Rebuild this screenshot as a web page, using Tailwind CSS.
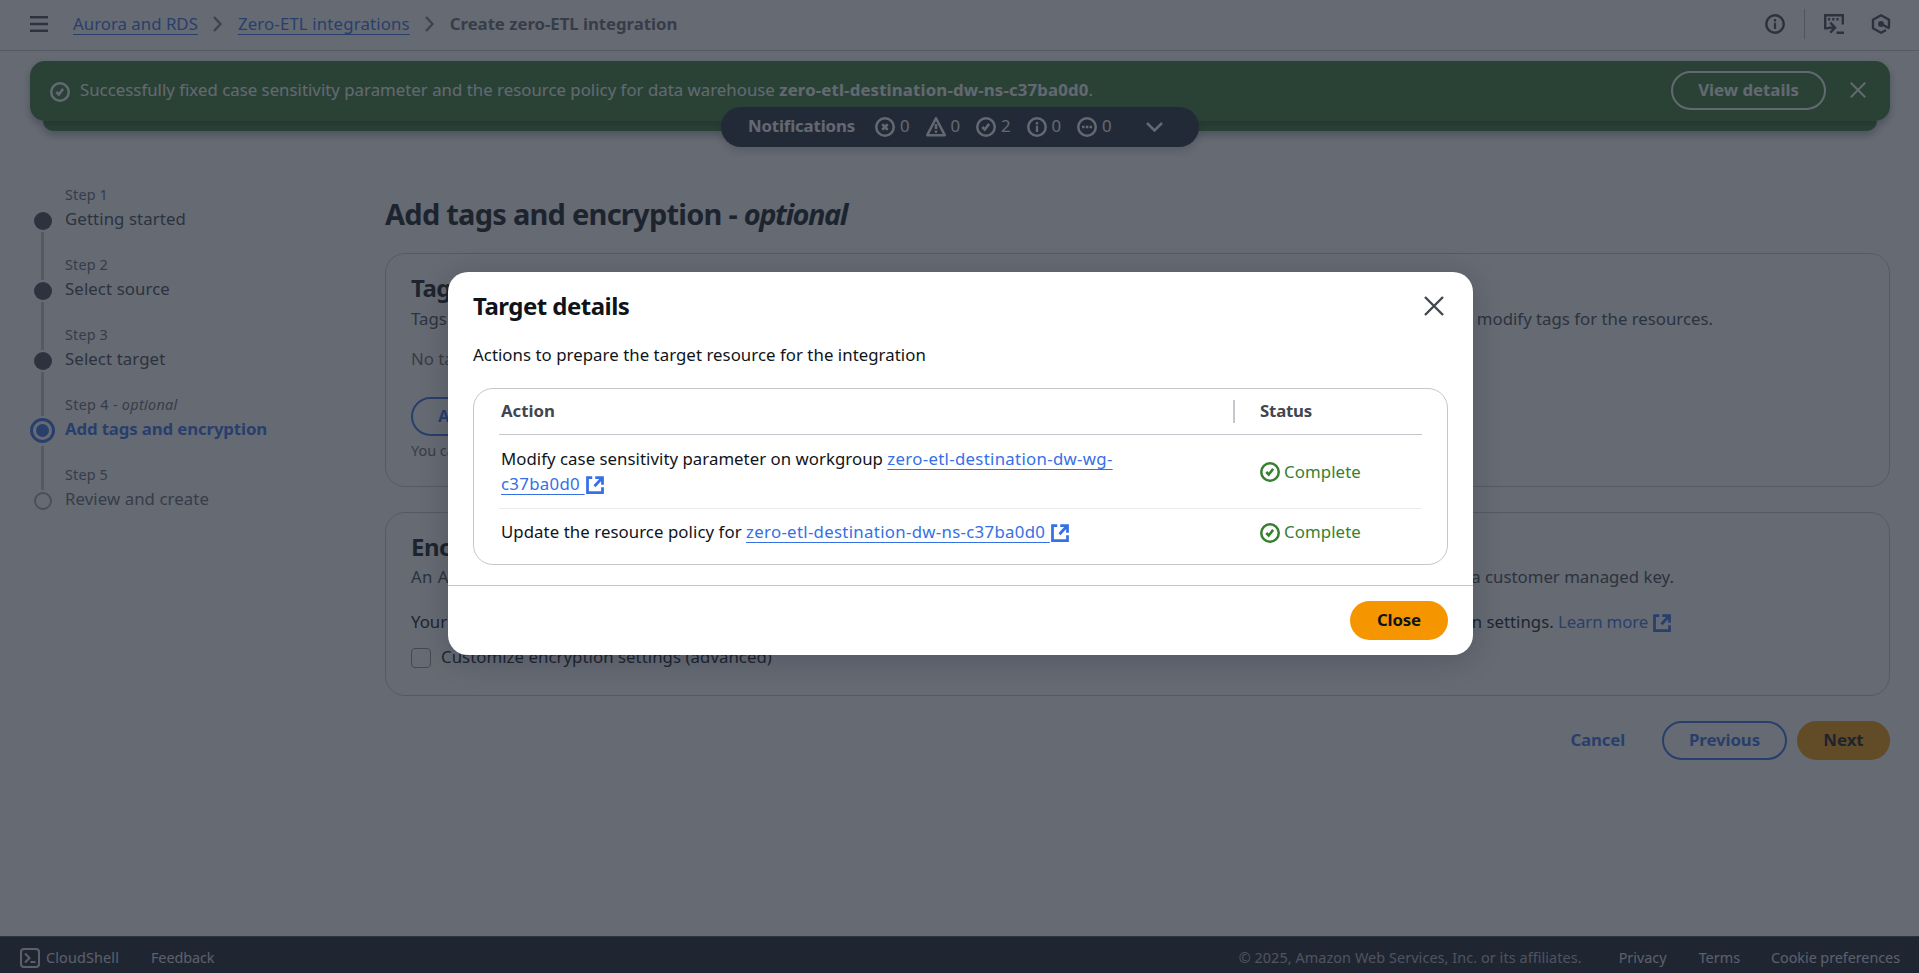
<!DOCTYPE html>
<html lang="en">
<head>
<meta charset="utf-8">
<title>Create zero-ETL integration</title>
<script src="https://cdn.jsdelivr.net/npm/@tailwindcss/browser@4"></script>
</head>
<body class="relative h-[973px] w-[1919px] overflow-hidden bg-white font-['Noto_Sans',sans-serif] text-[16.8px] leading-[25px] text-[#0f141a]">

<svg class="hidden">
  <symbol id="check" viewBox="0 0 16 16" fill="none" stroke="currentColor" stroke-width="2"><circle cx="8" cy="8" r="7"/><path d="m5 8 2 2 3.5-4.5"/></symbol>
  <symbol id="info" viewBox="0 0 16 16" fill="none" stroke="currentColor" stroke-width="2"><circle cx="8" cy="8" r="7"/><path d="M8 7v5M8 4v2" stroke-width="1.8"/></symbol>
  <symbol id="error" viewBox="0 0 16 16" fill="none" stroke="currentColor" stroke-width="2"><circle cx="8" cy="8" r="7"/><path d="m5.8 5.8 4.4 4.4m0-4.4-4.4 4.4"/></symbol>
  <symbol id="warn" viewBox="0 0 16 16" fill="none" stroke="currentColor" stroke-width="2" stroke-linejoin="round"><path d="m8 1 7 13.5H1L8 1Z"/><path d="M8 5.5v4M8 10.7v1.9"/></symbol>
  <symbol id="dots" viewBox="0 0 16 16" fill="none" stroke="currentColor" stroke-width="2"><circle cx="8" cy="8" r="7"/><path d="M4 8h2M7 8h2M10 8h2"/></symbol>
  <symbol id="ext" viewBox="0 0 16 16" fill="none" stroke="currentColor" stroke-width="2.2"><path d="M5.8 2H2v12h12V9.800M8.200 2.100H14v5.700M13.800 2.200 7.600 9"/></symbol>
  <symbol id="close" viewBox="0 0 20 20" fill="none" stroke="currentColor" stroke-width="2.4"><path d="m1 1 18 18M19 1 1 19"/></symbol>
  <symbol id="chev" viewBox="0 0 10 16" fill="none" stroke="currentColor" stroke-width="2.4"><path d="m1 1 6.5 7L1 15"/></symbol>
</svg>

<div class="flex h-full flex-col">
  <!-- Breadcrumb bar -->
  <header class="flex h-[51px] shrink-0 items-center border-b border-[#c6c6cd] pb-[2px] pl-[30px] pr-[28px]">
    <svg class="h-4 w-[18px] text-[#424650]" viewBox="0 0 18 16" stroke="currentColor" stroke-width="2.5"><path d="M0 1.25h18M0 8h18M0 14.75h18"/></svg>
    <a class="-mt-[2px] ml-[25px] tracking-[0.02px] text-[#3570e6] underline decoration-1 underline-offset-4 [text-decoration-skip-ink:none]">Aurora and RDS</a>
    <svg class="ml-[15px] h-4 w-[10px] text-[#7c7f88]"><use href="#chev"/></svg>
    <a class="-mt-[2px] ml-[15px] tracking-[0.16px] text-[#3570e6] underline decoration-1 underline-offset-4 [text-decoration-skip-ink:none]">Zero-ETL integrations</a>
    <svg class="ml-[15px] h-4 w-[10px] text-[#7c7f88]"><use href="#chev"/></svg>
    <span class="-mt-[2px] ml-[15px] font-bold tracking-[-0.04px] text-[#656871]">Create zero-ETL integration</span>
    <svg class="ml-auto size-5 text-[#424650]"><use href="#info"/></svg>
    <div class="ml-[19px] h-[30px] w-px bg-[#b4b4bb]"></div>
    <svg class="ml-[19px] size-5 text-[#424650]" viewBox="0 0 20 20" fill="none" stroke="currentColor" stroke-width="2.4"><path d="M4.500 14.200H1.200V1.200h17.600v9.300M4 5.300h2.200M8.200 5.300h2.200M12.400 5.300h2.200M4.500 13.700H10M6.300 8.700l4.800 5-4.800 5M12.500 18.700H20"/></svg>
    <svg class="ml-[27px] size-5 text-[#424650]" viewBox="0 0 20 20" fill="none" stroke="currentColor" stroke-width="2.4"><path d="M18 13.500V5.600L10 1.300 2 5.600v8.800l8 4.300 5-2.600"/><path d="m10.500 10 8 4.500"/><circle cx="10" cy="10" r="3" fill="currentColor" stroke="none"/></svg>
  </header>

  <!-- Stacked flash messages -->
  <section class="relative pl-[30px] pr-[29px] pt-[10px]">
    <div class="relative z-10 flex h-[60px] items-center rounded-[15px] bg-[#377b30] pb-px pl-[20px] pr-[24px] text-[#f9f9fa] shadow-[0_4px_8px_rgba(0,7,22,0.35)]">
      <svg class="mt-[2px] size-5"><use href="#check"/></svg>
      <p class="-mt-[3px] ml-[10px] whitespace-pre tracking-[0.02px]">Successfully fixed case sensitivity parameter and the resource policy for data warehouse <b class="tracking-[0.16px]">zero-etl-destination-dw-ns-c37ba0d0</b>.</p>
      <button class="ml-auto h-[39px] w-[155px] rounded-full border-2 border-[#f9f9fa] pb-[2px] text-center font-bold">View details</button>
      <svg class="-mt-px ml-[24px] size-4"><use href="#close"/></svg>
    </div>
    <div class="mx-[13px] h-[10px] rounded-b-[12px] bg-[#377b30] shadow-[0_4px_8px_rgba(0,7,22,0.35)]"></div>
    <div class="absolute left-[721px] top-[56px] z-20 flex h-10 w-[478px] items-center rounded-full bg-[#232b37] pl-[27px] text-[#f9f9fa] shadow-[0_4px_10px_rgba(0,7,22,0.2)]">
      <b class="-mt-[4px] w-[127px] tracking-[-0.14px]">Notifications</b>
      <div class="flex w-[50.5px] items-center gap-[5px]"><svg class="size-5"><use href="#error"/></svg><span class="-mt-[4px]">0</span></div>
      <div class="flex w-[50.5px] items-center gap-[5px]"><svg class="size-5"><use href="#warn"/></svg><span class="-mt-[4px]">0</span></div>
      <div class="flex w-[50.5px] items-center gap-[5px]"><svg class="size-5"><use href="#check"/></svg><span class="-mt-[4px]">2</span></div>
      <div class="flex w-[50.5px] items-center gap-[5px]"><svg class="size-5"><use href="#info"/></svg><span class="-mt-[4px]">0</span></div>
      <div class="flex w-[50.5px] items-center gap-[5px]"><svg class="size-5"><use href="#dots"/></svg><span class="-mt-[4px]">0</span></div>
      <svg class="ml-[18px] h-[10px] w-[17px]" viewBox="0 0 17 10" fill="none" stroke="currentColor" stroke-width="2.5"><path d="m1 1 7.500 7.500L16 1"/></svg>
    </div>
  </section>

  <div class="flex flex-1 pl-[30px] pr-[29px]">
    <!-- Wizard steps -->
    <nav class="w-[355px] shrink-0 pt-[53px]">
      <ol>
        <li class="flex h-[70px] gap-[10px]">
          <div class="flex w-[25px] flex-col items-center pt-[28px]"><i class="size-[18px] shrink-0 rounded-full bg-[#424650]"></i><i class="mt-[2px] h-[48px] w-[3px] shrink-0 bg-[#c6c6cd]"></i></div>
          <div class="pt-px"><p class="text-[14.4px] leading-5 tracking-[0.16px] text-[#656871]">Step 1</p><p class="mt-px tracking-[0.1px] text-[#424650]">Getting started</p></div>
        </li>
        <li class="flex h-[70px] gap-[10px]">
          <div class="flex w-[25px] flex-col items-center pt-[28px]"><i class="size-[18px] shrink-0 rounded-full bg-[#424650]"></i><i class="mt-[2px] h-[48px] w-[3px] shrink-0 bg-[#c6c6cd]"></i></div>
          <div class="pt-px"><p class="text-[14.4px] leading-5 tracking-[0.16px] text-[#656871]">Step 2</p><p class="mt-px tracking-[0.1px] text-[#424650]">Select source</p></div>
        </li>
        <li class="flex h-[70px] gap-[10px]">
          <div class="flex w-[25px] flex-col items-center pt-[28px]"><i class="size-[18px] shrink-0 rounded-full bg-[#424650]"></i><i class="mt-[2px] h-[44px] w-[3px] shrink-0 bg-[#c6c6cd]"></i></div>
          <div class="pt-px"><p class="text-[14.4px] leading-5 tracking-[0.16px] text-[#656871]">Step 3</p><p class="mt-px tracking-[0.1px] text-[#424650]">Select target</p></div>
        </li>
        <li class="flex h-[70px] gap-[10px]">
          <div class="flex w-[25px] flex-col items-center pt-[24px]"><i class="flex size-[25px] shrink-0 items-center justify-center rounded-full border-[3px] border-[#3570e6]"><i class="size-[13px] rounded-full bg-[#3570e6]"></i></i><i class="mt-[3px] h-[44px] w-[3px] shrink-0 bg-[#c6c6cd]"></i></div>
          <div class="pt-px"><p class="text-[14.4px] leading-5 tracking-[0.3px] text-[#656871]">Step 4 - <em>optional</em></p><p class="mt-px font-bold tracking-[-0.12px] text-[#3570e6]">Add tags and encryption</p></div>
        </li>
        <li class="flex h-[70px] gap-[10px]">
          <div class="flex w-[25px] flex-col items-center pt-[28px]"><i class="size-[18px] shrink-0 rounded-full border-[2.5px] border-[#a4a4ad]"></i></div>
          <div class="pt-px"><p class="text-[14.4px] leading-5 tracking-[0.16px] text-[#656871]">Step 5</p><p class="mt-px tracking-[0.08px] text-[#656871]">Review and create</p></div>
        </li>
      </ol>
    </nav>

    <main class="flex-1 pt-[65px]">
      <h1 class="whitespace-nowrap text-[29px] font-bold leading-9 tracking-[-0.75px]">Add tags and encryption - <em class="tracking-[-1.5px]">optional</em></h1>

      <section class="mt-[21px] h-[234px] rounded-[20px] border border-[#c6c6cd] px-[25px] pt-[19px]">
        <h2 class="text-2xl font-bold leading-[30px] tracking-[-0.47px]">Tags</h2>
        <div class="mt-[3px] flex w-[1302px] justify-between text-[#424650]"><span>Tags</span><span>modify tags for the resources.</span></div>
        <p class="mt-[15px] text-[#656871]">No tags associated with the resource.</p>
        <button class="mt-[26px] block h-[39px] rounded-full border-[2px] border-[#3570e6] px-[25px] pb-[2px] font-bold text-[#3570e6]">Add new tag</button>
        <p class="mt-[5px] text-[14.4px] leading-5 text-[#656871]">You can add up to 50 more tags.</p>
      </section>

      <section class="mt-[25px] h-[184px] rounded-[20px] border border-[#c6c6cd] px-[25px] pt-[19px]">
        <h2 class="text-2xl font-bold leading-[30px] tracking-[-0.47px]">Encryption</h2>
        <div class="mt-[2px] flex w-[1263px] justify-between text-[#424650]"><span class="tracking-[0.4px]">An AWS owned key</span><span>or a customer managed key.</span></div>
        <div class="mt-[20px] flex w-[1261px] items-center justify-between"><span>Your data is encrypted</span><span class="flex items-center whitespace-pre">encryption settings. <a class="tracking-[-0.13px] text-[#3570e6]">Learn more</a><svg class="ml-[4px] mt-[3px] size-5 text-[#3570e6]"><use href="#ext"/></svg></span></div>
        <label class="mt-[10px] flex tracking-[0.05px]"><i class="mr-[10px] mt-[4px] size-5 rounded-[4px] border-[1.5px] border-[#8c8c94]"></i>Customize encryption settings (advanced)</label>
      </section>

      <div class="mt-[25px] flex justify-end font-bold">
        <button class="mr-[37px] h-[39px] pb-[2px] tracking-[-0.14px] text-[#3570e6]">Cancel</button>
        <button class="h-[39px] w-[125px] rounded-full border-2 border-[#3570e6] pb-[2px] tracking-[-0.09px] text-[#3570e6]">Previous</button>
        <button class="ml-[10px] h-[39px] w-[93px] rounded-full bg-[#f59600] pb-[2px]">Next</button>
      </div>
    </main>
  </div>

  <footer class="flex h-[37px] shrink-0 items-center border-t border-[#424650] bg-[#161d26] pl-[20px] pr-[19px] pt-[6px] text-[14.4px] leading-5 text-[#dedee3]">
    <svg class="size-5" viewBox="0 0 20 20" fill="none" stroke="currentColor" stroke-width="2"><rect x="1" y="1" width="18" height="18" rx="3"/><path d="m5 5.500 4.500 4.500L5 14.500M10.500 14h5"/></svg>
    <span class="-mt-px ml-[6px] w-[105px] tracking-[0.15px]">CloudShell</span>
    <span class="-mt-px tracking-[-0.1px]">Feedback</span>
    <span class="-mt-px ml-auto tracking-[0.08px] text-[#b4b4bb]">© 2025, Amazon Web Services, Inc. or its affiliates.</span>
    <span class="-mt-px ml-[37px]">Privacy</span>
    <span class="-mt-px ml-[32px]">Terms</span>
    <span class="-mt-px ml-[31px] tracking-[-0.06px]">Cookie preferences</span>
  </footer>
</div>

<!-- Modal -->
<div class="absolute inset-0 z-30 bg-[#232b37]/70 pl-[448px] pt-[272px]">
  <div class="h-[383px] w-[1025px] rounded-[20px] bg-white pt-[19px] shadow-[0_5px_30px_rgba(0,7,22,0.18)]">
    <div class="flex items-center justify-between pl-[25px] pr-[29px]">
      <h2 class="text-2xl font-bold leading-[30px] tracking-[-0.52px]">Target details</h2>
      <svg class="size-5 text-[#424650]"><use href="#close"/></svg>
    </div>
    <p class="mt-[21px] px-[25px] tracking-[0.05px]">Actions to prepare the target resource for the integration</p>
    <div class="mx-[25px] mt-[21px] h-[177px] rounded-[20px] border border-[#c6c6cd] px-[25px]">
      <div class="flex h-[46px] border-b border-[#c6c6cd] pl-[2px] pt-[9px] font-bold text-[#424650]">
        <span class="w-[732px]">Action</span>
        <i class="mt-[2px] h-[23px] w-[2px] bg-[#c6c6cd]"></i>
        <span class="ml-[25px] tracking-[-0.2px]">Status</span>
      </div>
      <div class="flex h-[74px] items-center border-b border-[#ebebf0] pl-[2px]">
        <div class="-mt-[2px] w-[759px] whitespace-nowrap tracking-[0.04px]">Modify case sensitivity parameter on workgroup <a class="tracking-[0.31px] text-[#3570e6] underline decoration-1 underline-offset-4 [text-decoration-skip-ink:none]">zero-etl-destination-dw-wg-<br>c37ba0d0&nbsp;</a><svg class="inline-block size-5 align-[-5px] text-[#3570e6]"><use href="#ext"/></svg></div>
        <div class="flex items-center gap-[4px] tracking-[0.1px] text-[#37802f]"><svg class="mt-px size-5"><use href="#check"/></svg>Complete</div>
      </div>
      <div class="flex h-[45px] items-center pl-[2px]">
        <div class="w-[759px] whitespace-nowrap tracking-[0.07px]">Update the resource policy for <a class="tracking-[0.31px] text-[#3570e6] underline decoration-1 underline-offset-4 [text-decoration-skip-ink:none]">zero-etl-destination-dw-ns-c37ba0d0&nbsp;</a><svg class="inline-block size-5 align-[-5px] text-[#3570e6]"><use href="#ext"/></svg></div>
        <div class="flex items-center gap-[4px] tracking-[0.1px] text-[#37802f]"><svg class="mt-[3px] size-5"><use href="#check"/></svg>Complete</div>
      </div>
    </div>
    <div class="mt-[20px] flex justify-end border-t border-[#c6c6cd] pr-[25px] pt-[15px]">
      <button class="h-[39px] w-[98px] rounded-full bg-[#f59600] pb-[2px] font-bold tracking-[-0.14px]">Close</button>
    </div>
  </div>
</div>
</body>
</html>
